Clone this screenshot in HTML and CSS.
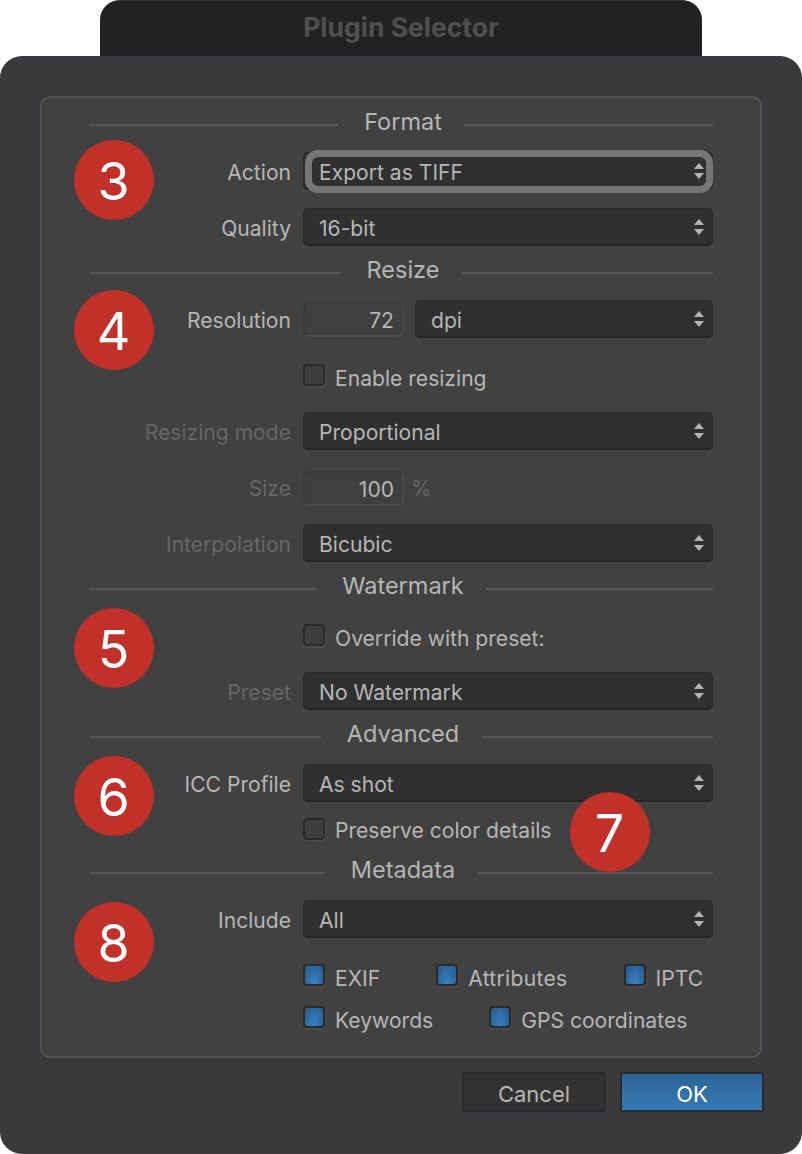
FILE: index.html
```html
<!DOCTYPE html>
<html lang="en">
<head>
<meta charset="utf-8">
<title>Plugin Selector</title>
<link rel="stylesheet" href="styles.css">
</head>
<body>
<div class="titlebar">Plugin Selector</div>
<main class="dialog">
  <div class="panel">
    <div class="heading first"><span class="rule"></span><span class="heading-text">Format</span><span class="rule"></span></div>
    <div class="row"><span class="label">Action</span><div class="select focused">Export as TIFF<svg class="arrows" viewBox="0 0 12 18"><path d="M6 1l5 6H1zM6 17l5-6H1z"/></svg></div></div>
    <div class="row gap18"><span class="label">Quality</span><div class="select">16-bit<svg class="arrows" viewBox="0 0 12 18"><path d="M6 1l5 6H1zM6 17l5-6H1z"/></svg></div></div>

    <div class="heading"><span class="rule"></span><span class="heading-text">Resize</span><span class="rule"></span></div>
    <div class="row"><span class="label">Resolution</span><div class="number">72</div><div class="select unit-select">dpi<svg class="arrows" viewBox="0 0 12 18"><path d="M6 1l5 6H1zM6 17l5-6H1z"/></svg></div></div>
    <div class="row gap19"><span class="label"></span><label class="check"><span class="box"></span>Enable resizing</label></div>
    <div class="row gap17"><span class="label off">Resizing mode</span><div class="select">Proportional<svg class="arrows" viewBox="0 0 12 18"><path d="M6 1l5 6H1zM6 17l5-6H1z"/></svg></div></div>
    <div class="row gap19"><span class="label off nudge">Size</span><div class="number">100</div><span class="unit">%</span></div>
    <div class="row gap17"><span class="label off">Interpolation</span><div class="select">Bicubic<svg class="arrows" viewBox="0 0 12 18"><path d="M6 1l5 6H1zM6 17l5-6H1z"/></svg></div></div>

    <div class="heading"><span class="rule"></span><span class="heading-text">Watermark</span><span class="rule"></span></div>
    <div class="row gap15"><span class="label"></span><label class="check"><span class="box"></span>Override with preset:</label></div>
    <div class="row gap17"><span class="label off">Preset</span><div class="select">No Watermark<svg class="arrows" viewBox="0 0 12 18"><path d="M6 1l5 6H1zM6 17l5-6H1z"/></svg></div></div>

    <div class="heading"><span class="rule"></span><span class="heading-text">Advanced</span><span class="rule"></span></div>
    <div class="row"><span class="label">ICC Profile</span><div class="select">As shot<svg class="arrows" viewBox="0 0 12 18"><path d="M6 1l5 6H1zM6 17l5-6H1z"/></svg></div></div>
    <div class="row gap9"><span class="label"></span><label class="check raised"><span class="box"></span>Preserve color details</label></div>

    <div class="heading after-check"><span class="rule"></span><span class="heading-text">Metadata</span><span class="rule"></span></div>
    <div class="row"><span class="label">Include</span><div class="select">All<svg class="arrows" viewBox="0 0 12 18"><path d="M6 1l5 6H1zM6 17l5-6H1z"/></svg></div></div>
    <div class="row gap19"><span class="label"></span><div class="checks"><label class="check"><span class="box on"></span>EXIF</label><label class="check spaced"><span class="box on"></span>Attributes</label><label class="check"><span class="box on"></span>IPTC</label></div></div>
    <div class="row gap4"><span class="label"></span><div class="checks"><label class="check"><span class="box on"></span>Keywords</label><label class="check"><span class="box on"></span>GPS coordinates</label></div></div>

    <span class="badge b3">3</span>
    <span class="badge b4">4</span>
    <span class="badge b5">5</span>
    <span class="badge b6">6</span>
    <span class="badge b7">7</span>
    <span class="badge b8">8</span>
  </div>
  <div class="actions">
    <button class="btn">Cancel</button>
    <button class="btn primary">OK</button>
  </div>
</main>
</body>
</html>
```
FILE: styles.css
```css
* { box-sizing: border-box; }
html, body { margin: 0; padding: 0; }
body {
  width: 802px;
  height: 1154px;
  background: #fff;
  overflow: hidden;
  font-family: Inter, "Liberation Sans", sans-serif;
  font-size: 21.1px;
  color: #b6b6b6;
}
.titlebar {
  width: 602px;
  height: 56px;
  margin-left: 100px;
  background: #222223;
  border-top: 1px solid #2e2e2e;
  border-radius: 20px 20px 0 0;
  color: #4f4f4f;
  font-size: 26.5px;
  font-weight: 700;
  line-height: 52px;
  text-align: center;
}
.dialog {
  height: 1098px;
  padding: 40px 40px 0;
  background: #3a3a3c;
  border-radius: 22px;
}
.panel {
  position: relative;
  height: 962px;
  padding: 12px 47px 0;
  background: #414141;
  border: 2px solid #525252;
  border-radius: 10px;
}
.heading {
  display: flex;
  align-items: center;
  height: 28px;
  margin-top: 12px;
  margin-bottom: 14px;
  line-height: 28px;
}
.heading.first { margin-top: 0; }
.heading.after-check { margin-top: 9px; }
.heading-text {
  margin-top: -4px;
  padding: 0 22px 0 26px;
  color: #b6b6b6;
  font-size: 23.5px;
  white-space: nowrap;
}
.rule { flex: 1; height: 2px; margin-top: 2px; background: #575757; }
.row { display: flex; align-items: center; height: 38px; }
.gap4 { margin-top: 4px; }
.gap9 { margin-top: 9px; }
.gap15 { margin-top: 15px; }
.gap17 { margin-top: 17px; }
.gap18 { margin-top: 18px; }
.gap19 { margin-top: 19px; }
.label {
  flex: none;
  width: 202px;
  margin-top: 2px;
  margin-right: 12px;
  text-align: right;
  white-space: nowrap;
}
.label.off { color: #666; }
.label.nudge { margin-top: 0; }
.select {
  position: relative;
  flex: 1;
  height: 38px;
  padding-left: 15px;
  background: #303031;
  border: 1px solid #2a2a2a;
  border-bottom: 2px solid #262626;
  border-radius: 5px;
  line-height: 40px;
  white-space: nowrap;
}
.select.focused::after {
  content: "";
  position: absolute;
  left: 1px;
  right: -1px;
  top: -3px;
  bottom: -5px;
  border: 7px solid #767676;
  border-radius: 13px;
}
.unit-select { margin-left: 11px; }
.arrows { position: absolute; right: 7px; top: 9px; width: 12px; height: 18px; fill: #b4b4b4; }
.number {
  width: 101px;
  height: 35px;
  padding-right: 8px;
  background: #3f3f3f;
  border: 2px solid #4a4a4a;
  border-top-color: #3a3a3a;
  border-left-color: #3b3b3b;
  border-radius: 6px;
  line-height: 33px;
  text-align: right;
}
.unit { margin-top: 0; margin-left: 7px; color: #666; }
.check { display: flex; align-items: center; padding-top: 4px; white-space: nowrap; }
.check.raised { padding-top: 0; }
.check.spaced { letter-spacing: 0.3px; }
.box {
  flex: none;
  width: 22px;
  height: 22px;
  margin: 0 10px 6px 0;
  background: #3e3e3f;
  border: 2px solid #2a2a2a;
  border-radius: 4px;
  box-shadow: 1px 2px 0 #4b4b4b;
}
.check.raised .box { margin-bottom: 2px; }
.box.on {
  background: radial-gradient(ellipse at 50% 100%, #3b82c2 0%, #2e6ba4 55%, #285a8a 100%);
}
.checks { display: flex; gap: 56px; }
.badge {
  position: absolute;
  left: 32px;
  width: 80px;
  height: 80px;
  padding-right: 1px;
  background: #c13129;
  border-radius: 50%;
  color: #fff;
  font-size: 52px;
  line-height: 84px;
  text-align: center;
}
.b3 { top: 42px; }
.b4 { top: 192px; }
.b5 { top: 510px; }
.b6 { top: 658px; }
.b7 { top: 694px; left: 528px; }
.b8 { top: 804px; }
.actions { display: flex; justify-content: flex-end; gap: 14px; margin-top: 14px; margin-right: -2px; }
.btn {
  width: 144px;
  height: 40px;
  padding: 3px 0 0;
  background: #323233;
  border: 2px solid #2a2a2a;
  border-radius: 3px;
  color: #b6b6b6;
  font: inherit;
  font-size: 22px;
}
.btn.primary {
  background: linear-gradient(#2c6496, #3779b4);
  color: #fff;
}
```
